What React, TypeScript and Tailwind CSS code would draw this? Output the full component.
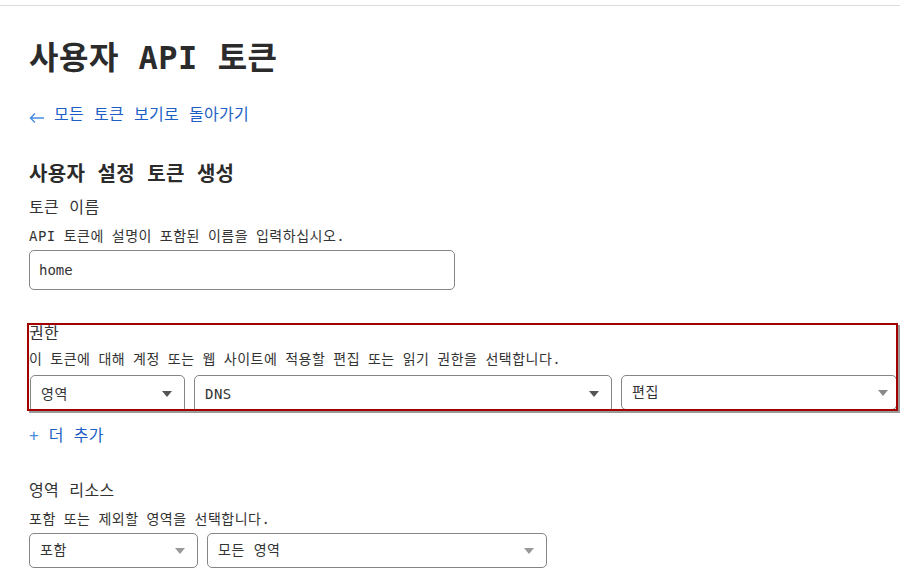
const font = { fontFamily: '"DejaVu Sans Mono", "Noto Sans CJK KR", monospace' };

const Caret = ({ color }: { color: string }) => (
  <svg width="10" height="6" viewBox="0 0 10 6" className="shrink-0">
    <path d="M0 0 L10 0 L5 6 Z" fill={color} />
  </svg>
);

interface SelectBoxProps {
  value: string;
  className: string;
  caret?: string;
}

const SelectBox = ({ value, className, caret = '#555' }: SelectBoxProps) => (
  <div
    className={`flex items-center justify-between rounded-[5px] border border-[#858585] bg-white pl-[10px] text-[14px] tracking-[0.5px] text-[#333] ${className}`}
  >
    <span>{value}</span>
    <Caret color={caret} />
  </div>
);

export default function App() {
  return (
    <div className="min-h-[578px] w-[900px] overflow-hidden bg-white text-[#333]" style={font}>
      <div className="mt-[5px] border-t border-[#dcdcdc]" />
      <div className="pl-[29px]">
        <h1 className="mt-[32px] text-[32px] leading-[40px] font-bold tracking-[0.5px] text-[#2b2b2b]">사용자 API 토큰</h1>

        <a className="mt-[27px] flex items-center gap-[9px] text-[16px] leading-[20px] tracking-[0.3px] text-[#1d5fc4]">
          <svg width="16" height="12" viewBox="0 0 16 12" className="mt-[5px]">
            <path d="M15 6 H2 M6 1.5 L1.5 6 L6 10.5" fill="none" stroke="#4a8de0" strokeWidth="1.5" />
          </svg>
          <span>모든 토큰 보기로 돌아가기</span>
        </a>

        <h2 className="mt-[35px] text-[20px] leading-[28px] font-bold tracking-[0.3px] text-[#2b2b2b]">사용자 설정 토큰 생성</h2>

        <div className="mt-[9px] text-[16px] leading-[22px] tracking-[0.4px]">토큰 이름</div>
        <div className="mt-[8px] text-[14px] leading-[18px] tracking-[0.5px] [word-spacing:-1px]">
          API 토큰에 설명이 포함된 이름을 입력하십시오.
        </div>
        <div className="mt-[5px] flex h-[40px] w-[426px] items-center rounded-[5px] border border-[#858585] pl-[9px] text-[14px]">
          home
        </div>

        <div className="relative mt-[33px]">
          <div className="text-[16px] leading-[22px] tracking-[0.4px]">권한</div>
          <div className="mt-[5px] text-[14px] leading-[18px] tracking-[0.5px] [word-spacing:-1px]">
            이 토큰에 대해 계정 또는 웹 사이트에 적용할 편집 또는 읽기 권한을 선택합니다.
          </div>
          <div className="mt-[7px] flex items-start gap-[9px] pl-[1px]">
            <SelectBox value="영역" className="h-[38px] w-[155px] pr-[12px]" />
            <SelectBox value="DNS" className="h-[38px] w-[418px] pr-[12px]" />
            <SelectBox value="편집" caret="#8a8a8a" className="h-[35px] w-[276px] pr-[8px]" />
          </div>
          <div className="pointer-events-none absolute -left-[2px] top-0 h-[88px] w-[871px] border-2 border-[#a30000] shadow-[2px_2px_0_#9a9a9a]" />
        </div>

        <div className="mt-[13px] text-[16px] leading-[20px] tracking-[0.3px] text-[#1d5fc4]">
          <span className="text-[#4a8de0]">+</span> 더 추가
        </div>

        <div className="mt-[34px] text-[16px] leading-[22px] tracking-[0.4px]">영역 리소스</div>
        <div className="mt-[8px] text-[14px] leading-[18px] tracking-[0.5px] [word-spacing:-1px]">
          포함 또는 제외할 영역을 선택합니다.
        </div>
        <div className="mt-[5px] flex gap-[9px]">
          <SelectBox value="포함" caret="#999" className="h-[35px] w-[169px] pr-[12px]" />
          <SelectBox value="모든 영역" caret="#999" className="h-[35px] w-[340px] pr-[12px]" />
        </div>
      </div>
    </div>
  );
}
